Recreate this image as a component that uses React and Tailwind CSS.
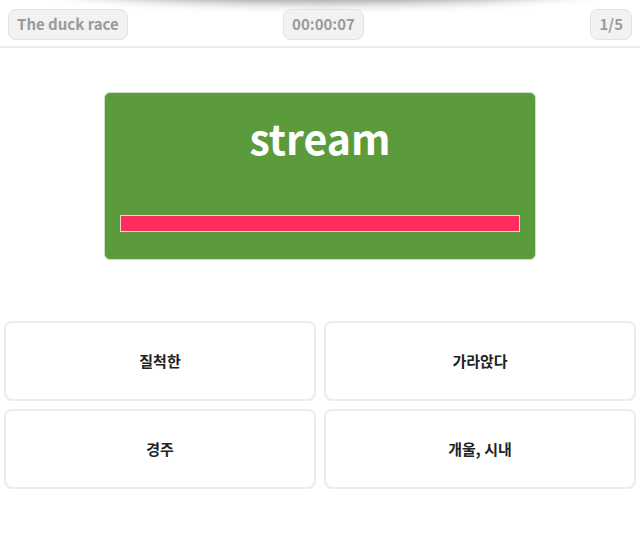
import React from "react";

const choices = ["질척한", "가라앉다", "경주", "개울, 시내"];

function Badge({ children }) {
    return (
        <div className="h-[31px] px-2 flex items-center rounded-lg border border-[#e3e3e3] bg-[#f2f2f2] text-[15px] font-bold text-[#9a9a9a]">
            {children}
        </div>
    );
}

export default function App() {
    return (
        <div
            className="relative w-[640px] h-[558px] bg-white overflow-hidden"
            style={{ fontFamily: '"Noto Sans CJK KR", "Noto Sans", sans-serif' }}
        >
            {/* shadow of the sheet above */}
            <div className="absolute left-[40px] right-[30px] -top-[40px] h-[40px] rounded-[50%] shadow-[0_2px_12px_rgba(0,0,0,0.45)] bg-white" />

            {/* Header */}
            <div className="relative grid grid-cols-[1fr_auto_1fr] items-center px-2 pt-[9px] pb-[6px] border-b-2 border-[#ececec]">
                <div className="justify-self-start">
                    <Badge>The duck race</Badge>
                </div>
                <div className="ml-[7px]">
                    <Badge>00:00:07</Badge>
                </div>
                <div className="justify-self-end">
                    <Badge>1/5</Badge>
                </div>
            </div>

            {/* Word card */}
            <div className="flex justify-center mt-[44px]">
                <div className="w-[432px] h-[168px] rounded-md bg-[#5c9b3b] border border-[#cfdcc6] flex flex-col items-center">
                    <div className="mt-[14px] text-[41px] font-bold leading-[60px] text-white">stream</div>
                    <div className="mt-[48px] w-[400px] h-[17px] bg-[#ff2d5e] border border-[#e9d6d8]" />
                </div>
            </div>

            {/* Choices */}
            <div className="grid grid-cols-2 gap-2 px-1 mt-[61px]">
                {choices.map((c, i) => (
                    <button
                        key={i}
                        className="h-[80px] rounded-lg border-2 border-[#ececec] bg-white flex items-center justify-center text-[15px] font-bold text-[#222]"
                    >
                        {c}
                    </button>
                ))}
            </div>
        </div>
    );
}
